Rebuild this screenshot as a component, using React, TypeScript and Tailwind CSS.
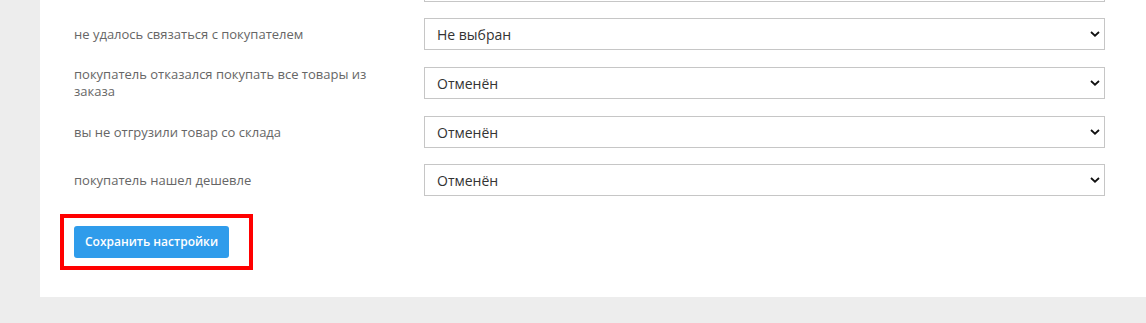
import React from 'react'

const rows = [
  { label: '', value: 'Отменён' },
  { label: 'не удалось связаться с покупателем', value: 'Не выбран' },
  { label: 'покупатель отказался покупать все товары из заказа', value: 'Отменён' },
  { label: 'вы не отгрузили товар со склада', value: 'Отменён' },
  { label: 'покупатель нашел дешевле', value: 'Отменён' },
]

const options = ['Не выбран', 'Отменён', 'Доставлен']

function SettingRow({ label, value }: { label: string; value: string }) {
  return (
    <div className="flex items-center mb-4">
      <div className="w-[350px] text-[13px] leading-[17px] text-[#666] pr-[30px]">{label}</div>
      <div className="relative w-[681px]">
        <select
          defaultValue={value}
          className="appearance-none w-full h-[32px] border border-[#c6c6c6] bg-white pl-[12px] pr-8 text-[14px] text-[#333] outline-none"
        >
          {options.map((o) => (
            <option key={o}>{o}</option>
          ))}
        </select>
        <svg
          className="absolute right-[5px] top-1/2 -translate-y-1/2 pointer-events-none"
          width="10"
          height="7"
          viewBox="0 0 10 7"
          fill="none"
        >
          <path d="M1 1.5L5 5.2L9 1.5" stroke="#111" strokeWidth="1.8" />
        </svg>
      </div>
    </div>
  )
}

export default function App() {
  return (
    <div
      className="w-[1146px] h-[323px] overflow-hidden bg-[#ededed]"
      style={{ fontFamily: '"Open Sans", "Liberation Sans", sans-serif' }}
    >
      <div className="ml-[40px] w-[1200px] h-[297px] bg-white pl-[34px] overflow-hidden">
        <div className="mt-[-30px]">
          {rows.map((r, i) => (
            <SettingRow key={i} label={r.label} value={r.value} />
          ))}
        </div>
        {/* highlighted save button */}
        <div className="ml-[-14px] mt-[2px] inline-block border-4 border-[#ff0000] pt-[8px] pb-[8px] pl-[10px] pr-[20px]">
          <button className="h-[32px] w-[155px] rounded-[3px] bg-[#2f9ceb] text-white text-[12px] font-semibold">
            Сохранить настройки
          </button>
        </div>
      </div>
    </div>
  )
}
